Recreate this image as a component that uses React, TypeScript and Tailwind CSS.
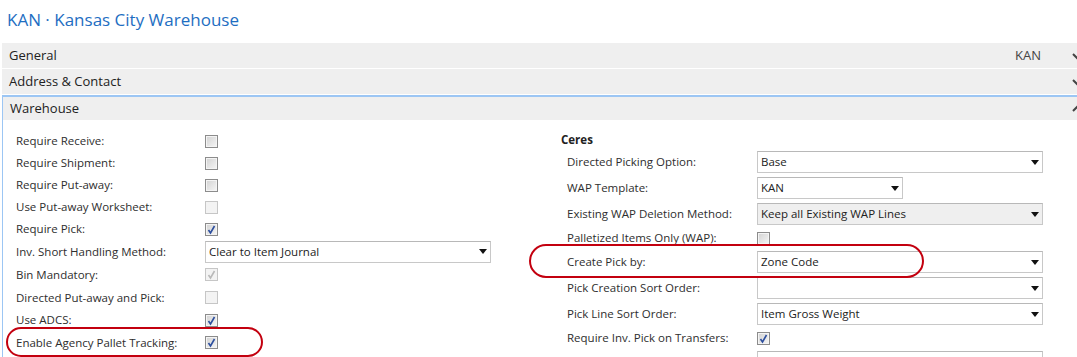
import React from "react";

const FONT = "font-['Open_Sans','Noto_Sans',sans-serif]";

function Chevron({ up }: { up?: boolean }) {
  return (
    <svg width="10" height="8" viewBox="0 0 10 8" className="shrink-0">
      {up ? (
        <path d="M1 6 L5 2 L9 6" fill="none" stroke="#444" strokeWidth="2" />
      ) : (
        <path d="M1 2 L5 6 L9 2" fill="none" stroke="#444" strokeWidth="2" />
      )}
    </svg>
  );
}

function Bar({
  label,
  right,
  up,
  h,
}: {
  label: string;
  right?: string;
  up?: boolean;
  h: string;
}) {
  return (
    <div className={`${h} bg-[#efefef] flex items-center pl-[7px] text-[13px] text-[#222]`}>
      <span className="flex-1">{label}</span>
      {right && <span className="text-[#444] mr-[31px]">{right}</span>}
      <div className="w-[10px] mr-[-5px] shrink-0">
        <Chevron up={up} />
      </div>
    </div>
  );
}

function Cb({ checked, disabled }: { checked?: boolean; disabled?: boolean }) {
  return (
    <span
      className={`relative inline-block w-[13px] h-[13px] border ${
        disabled
          ? "border-[#c6c6c6] bg-[#f3f3f3]"
          : "border-[#8c8c8c] bg-linear-to-br from-[#d2d2d2] to-[#f6f6f6] shadow-[inset_0_0_0_1px_#f4f4f4]"
      }`}
    >
      {checked && (
        <svg width="11" height="11" viewBox="0 0 11 11" className="absolute left-0 top-0">
          <path
            d="M2.5 6 L4.5 9 L8.5 2"
            fill="none"
            stroke={disabled ? "#b9b9b9" : "#2c4e9e"}
            strokeWidth="1.6"
          />
        </svg>
      )}
    </span>
  );
}

function Select({
  value,
  w,
  gray,
}: {
  value: string;
  w: string;
  gray?: boolean;
}) {
  return (
    <div
      className={`${w} h-[22px] border border-[#c8c8c8] border-t-[#b8b8b8] ${
        gray ? "bg-[#efefef]" : "bg-white"
      } flex items-center pl-[3px] pr-[3px] text-[#222]`}
    >
      <span className="flex-1 truncate">{value}</span>
      <svg width="8" height="5" viewBox="0 0 8 5">
        <path d="M0 0 L8 0 L4 5 Z" fill="#111" />
      </svg>
    </div>
  );
}

function LRow({
  label,
  h,
  children,
}: {
  label: string;
  h: string;
  children: React.ReactNode;
}) {
  return (
    <div className={`${h} flex items-center`}>
      <span className="w-[189px] shrink-0">{label}</span>
      {children}
    </div>
  );
}

function RRow({
  label,
  h,
  children,
}: {
  label: string;
  h: string;
  children: React.ReactNode;
}) {
  return (
    <div className={`${h} flex items-center pl-[6px]`}>
      <span className="w-[190px] shrink-0">{label}</span>
      {children}
    </div>
  );
}

export default function App() {
  return (
    <div className={`relative w-[1077px] h-[357px] overflow-hidden bg-white ${FONT} text-[11.5px] text-[#2e2e2e]`}>
      <div className="h-[43px] pl-[7px] pt-[8px] text-[17px] text-[#1e6ec2] leading-[24px]">
        KAN · Kansas City Warehouse
      </div>
      <div className="ml-[2px]">
        <Bar label="General" right="KAN" h="h-[25px]" />
        <div className="h-px" />
        <Bar label="Address & Contact" h="h-[25px]" />
        <div className="mt-px border-t-2 border-l border-[#9cc6f4]">
          <Bar label="Warehouse" up h="h-[23px]" />
          <div className="flex pt-[10px]">
            <div className="pl-[13px] w-[488px] shrink-0">
              <LRow label="Require Receive:" h="h-[22px]">
                <Cb />
              </LRow>
              <LRow label="Require Shipment:" h="h-[22px]">
                <Cb />
              </LRow>
              <LRow label="Require Put-away:" h="h-[22px]">
                <Cb />
              </LRow>
              <LRow label="Use Put-away Worksheet:" h="h-[22px]">
                <Cb disabled />
              </LRow>
              <LRow label="Require Pick:" h="h-[22px]">
                <Cb checked />
              </LRow>
              <LRow label="Inv. Short Handling Method:" h="h-[23px]">
                <Select value="Clear to Item Journal" w="w-[286px]" />
              </LRow>
              <LRow label="Bin Mandatory:" h="h-[23px]">
                <Cb checked disabled />
              </LRow>
              <LRow label="Directed Put-away and Pick:" h="h-[23px]">
                <Cb disabled />
              </LRow>
              <LRow label="Use ADCS:" h="h-[22px]">
                <Cb checked />
              </LRow>
              <LRow label="Enable Agency Pallet Tracking:" h="h-[23px]">
                <Cb checked />
              </LRow>
            </div>
            <div className="ml-[70px] w-[520px] shrink-0">
              <div className="h-[19px] flex items-center font-bold text-[#222]">Ceres</div>
              <RRow label="Directed Picking Option:" h="h-[26px]">
                <Select value="Base" w="w-[286px]" />
              </RRow>
              <RRow label="WAP Template:" h="h-[26px]">
                <Select value="KAN" w="w-[146px]" />
              </RRow>
              <RRow label="Existing WAP Deletion Method:" h="h-[26px]">
                <Select value="Keep all Existing WAP Lines" w="w-[286px]" gray />
              </RRow>
              <RRow label="Palletized Items Only (WAP):" h="h-[22px]">
                <Cb />
              </RRow>
              <RRow label="Create Pick by:" h="h-[26px]">
                <Select value="Zone Code" w="w-[286px]" />
              </RRow>
              <RRow label="Pick Creation Sort Order:" h="h-[26px]">
                <Select value="" w="w-[286px]" />
              </RRow>
              <RRow label="Pick Line Sort Order:" h="h-[26px]">
                <Select value="Item Gross Weight" w="w-[286px]" />
              </RRow>
              <RRow label="Require Inv. Pick on Transfers:" h="h-[22px]">
                <Cb checked />
              </RRow>
              <RRow label="" h="h-[26px]">
                <Select value="" w="w-[286px]" />
              </RRow>
            </div>
          </div>
        </div>
      </div>
      <div className="absolute left-[6px] top-[327px] w-[257px] h-[30px] rounded-full border-2 border-[#c3000f]" />
      <div className="absolute left-[529px] top-[244px] w-[395px] h-[34px] rounded-full border-2 border-[#c3000f]" />
    </div>
  );
}
